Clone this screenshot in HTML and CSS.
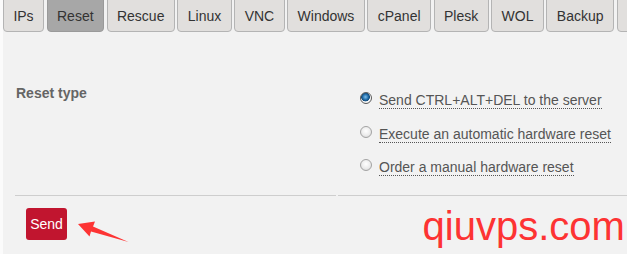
FILE: index.html
```html
<!DOCTYPE html>
<html lang="en">
<head>
<meta charset="utf-8">
<title>Reset</title>
<link rel="stylesheet" href="styles.css">
</head>
<body>
<div class="page">
  <nav class="tabs">
    <a class="tab">IPs</a>
    <a class="tab active">Reset</a>
    <a class="tab">Rescue</a>
    <a class="tab">Linux</a>
    <a class="tab">VNC</a>
    <a class="tab">Windows</a>
    <a class="tab">cPanel</a>
    <a class="tab">Plesk</a>
    <a class="tab">WOL</a>
    <a class="tab">Backup</a>
    <a class="tab tab-more" aria-hidden="true"></a>
  </nav>
  <form class="form">
    <div class="row">
      <div class="cell label-cell">Reset type</div>
      <div class="cell options">
        <label class="option"><input class="radio" type="radio" name="type" checked><span class="opt-text">Send CTRL+ALT+DEL to the server</span></label>
        <label class="option"><input class="radio" type="radio" name="type"><span class="opt-text">Execute an automatic hardware reset</span></label>
        <label class="option"><input class="radio" type="radio" name="type"><span class="opt-text">Order a manual hardware reset</span></label>
      </div>
    </div>
    <div class="actions">
      <button class="send" type="button">Send</button>
    </div>
  </form>
  <svg class="arrow" viewBox="75 218 60 28" width="60" height="28">
    <polygon points="78,224 95,221.5 93,226.6 128.5,242 91,231.6 89.5,236.5" fill="#fd3434"/>
  </svg>
  <div class="watermark">qiuvps.com</div>
</div>
</body>
</html>
```

FILE: styles.css
```css
html, body {
  margin: 0;
  padding: 0;
  background: #fbfbfb;
}

body {
  font-family: "Liberation Sans", Arial, sans-serif;
  font-size: 14px;
  color: #333;
}

.page {
  position: relative;
  margin-left: 3px;
  height: 254px;
  background: #f2f2f2;
  overflow: hidden;
}

.tabs {
  display: flex;
  gap: 2.6px;
  margin-top: -6px;
}

.tab {
  flex-shrink: 0;
  box-sizing: border-box;
  height: 38px;
  padding: 6px 9.4px 0;
  display: flex;
  align-items: center;
  line-height: 16px;
  background: #e1dfdd;
  border: 1px solid #b4b4b4;
  border-radius: 4px;
  color: #333;
}

.tab.active {
  background: #a7a7a7;
  border-color: #9a9a9a;
}

.tab-more {
  width: 60px;
}

.form {
  margin-top: 48px;
}

.row {
  display: grid;
  grid-template-columns: 321px 289px;
  column-gap: 2px;
  margin-left: 12px;
}

.cell {
  border-bottom: 1px solid #cecece;
}

.label-cell {
  padding: 5px 0 0 1px;
  line-height: 16px;
  font-weight: bold;
  color: #656565;
}

.options {
  display: flex;
  flex-direction: column;
  gap: 16.5px;
  padding: 12px 0 19px 22px;
}

.option {
  display: flex;
  align-items: flex-start;
  line-height: 16px;
  color: #555;
}

.radio {
  appearance: none;
  -webkit-appearance: none;
  box-sizing: border-box;
  width: 12px;
  height: 12px;
  margin: 0 7px 0 0;
  border-radius: 50%;
  border: 1px solid #a3a3a3;
  background: radial-gradient(circle at 50% 40%, #ffffff 0%, #ececec 55%, #cfcfcf 100%);
  flex-shrink: 0;
}

.radio:checked {
  border-color: #5a5a5a;
  background: radial-gradient(circle at 45% 40%, #7fc0ec 0%, #1f6aa6 35%, #174d7a 50%, #ffffff 58%, #d6d6d6 100%);
}

.opt-text {
  border-bottom: 1px dotted #555;
}

.actions {
  padding: 12px 0 0 23px;
}

.send {
  box-sizing: border-box;
  height: 32px;
  width: 41px;
  padding: 0;
  border: none;
  border-radius: 3px;
  background: #c1152f;
  color: #fff;
  font-family: "Liberation Sans", Arial, sans-serif;
  font-size: 14px;
}

.arrow {
  position: absolute;
  left: 72px;
  top: 218px;
}

.watermark {
  position: absolute;
  left: 419.6px;
  top: 206px;
  font-size: 40px;
  line-height: 40px;
  color: #fd3333;
}
```
